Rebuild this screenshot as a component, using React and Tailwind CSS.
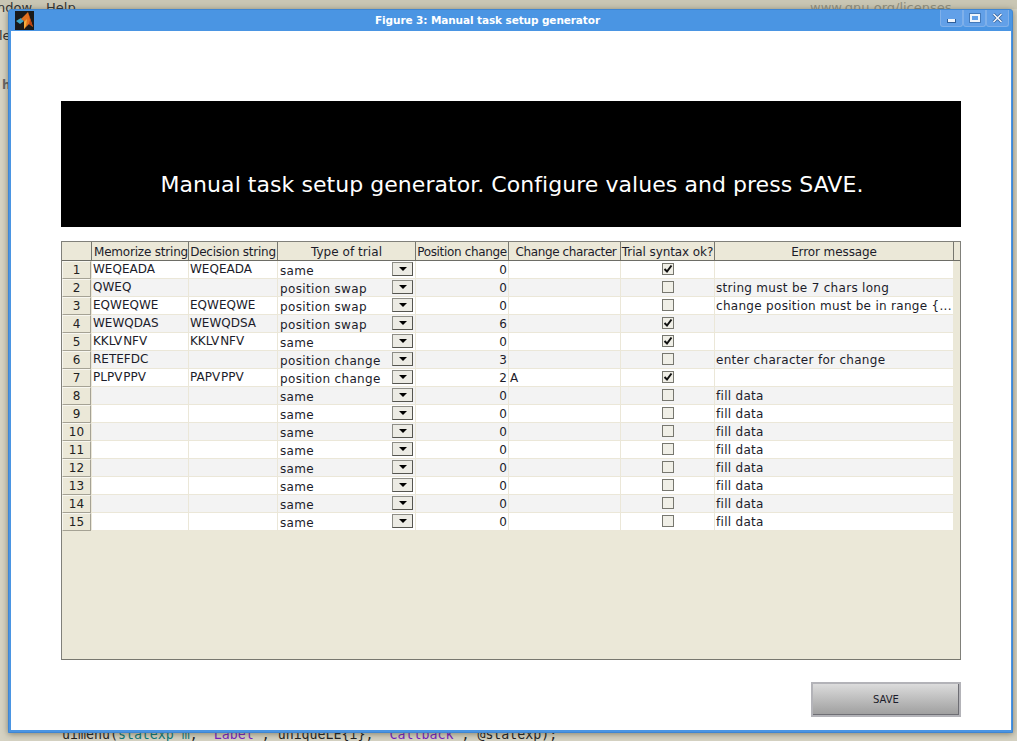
const rows = [
  ["WEQEADA", "WEQEADA", "same", "0", "", true, ""],
  ["QWEQ", "", "position swap", "0", "", false, "string must be 7 chars long"],
  ["EQWEQWE", "EQWEQWE", "position swap", "0", "", false, "change position must be in range {..."],
  ["WEWQDAS", "WEWQDSA", "position swap", "6", "", true, ""],
  ["KKLV NFV", "KKLV NFV", "same", "0", "", true, ""],
  ["RETEFDC", "", "position change", "3", "", false, "enter character for change"],
  ["PLPV PPV", "PAPV PPV", "position change", "2", "A", true, ""],
  ...Array.from({ length: 8 }, () => ["", "", "same", "0", "", false, "fill data"]),
];

const headers = [
  ["Memorize string", "w-[97px] pl-[2px] tracking-[-0.2px]"],
  ["Decision string", "w-[89px] tracking-[-0.25px]"],
  ["Type of trial", "w-[138px] tracking-[0.05px]"],
  ["Position change", "w-[93px] tracking-[-0.35px]"],
  ["Change character", "w-[112px] pl-[3px] tracking-[-0.4px]"],
  ["Trial syntax ok?", "w-[94px] tracking-[-0.1px]"],
  ["Error message", "w-[239px] tracking-[-0.1px]"],
];

function Logo() {
  return (
    <svg width="19" height="19" viewBox="0 0 19 19" className="bg-[#1a1a1a]">
      <path d="M1 10 L6 7 L9 10 L5 13 Z" fill="#3fa4c4" />
      <path d="M6 8 L13 1 L18 16 L14 13 L9 18 L9 10 Z" fill="#e2701f" />
      <path d="M13 1 L15 9 L14 13 L18 16 Z" fill="#b93f10" />
      <path d="M9 11 L12 8 L11 15 L9 18 Z" fill="#f3ad3c" />
    </svg>
  );
}

function WinBtn({ children }) {
  return (
    <div className="w-[23px] h-[17px] border border-[#7fb0ea] border-t-0 rounded-b-[3px] bg-[#62a0e8] flex items-center justify-center">
      {children}
    </div>
  );
}

function Row({ r, i }) {
  const bg = i % 2 === 0 ? "bg-white" : "bg-[#f3f3f3]";
  const cell = "h-full border-l border-b border-[#ebe7d8] shrink-0 flex items-center overflow-hidden whitespace-nowrap";
  return (
    <div className="flex h-[18px] text-[12px] text-[#1c1c2a]">
      <div className="w-[29px] h-full shrink-0 bg-[#ebe8d8] border border-[#a5a294] border-t-[#f8f7f0] border-l-[#f8f7f0] flex items-center justify-center text-[#222]">
        {i + 1}
      </div>
      <div className={`w-[97px] pl-px pb-[2px] [word-spacing:-3px] ${cell} ${bg}`}>{r[0]}</div>
      <div className={`w-[89px] pl-px pb-[2px] [word-spacing:-3px] ${cell} ${bg}`}>{r[1]}</div>
      <div className={`w-[138px] pl-[2px] pr-[2px] justify-between ${cell} ${bg}`}>
        <span className="tracking-[0.35px] pt-[2px]">{r[2]}</span>
        <span className="mb-[2px] w-[21px] h-[14px] bg-[#ecebe4] border border-[#8d8d86] border-b-[#55554f] border-r-[#55554f] flex items-center justify-center">
          <span className="w-0 h-0 border-l-[4px] border-r-[4px] border-t-[4px] border-l-transparent border-r-transparent border-t-black" />
        </span>
      </div>
      <div className={`w-[93px] pr-[1px] justify-end ${cell} ${bg}`}>{r[3]}</div>
      <div className={`w-[112px] pl-px ${cell} ${bg}`}>{r[4]}</div>
      <div className={`w-[94px] justify-center pl-px ${cell} ${bg}`}>
        <span className="mb-[2px] w-[12px] h-[12px] bg-[#f0efe7] border border-[#77776f] flex items-center justify-center">
          {r[5] && (
            <svg width="10" height="10" viewBox="0 0 10 10">
              <path d="M1.5 5 L4 7.5 L8.5 1.5" fill="none" stroke="#111" strokeWidth="2" />
            </svg>
          )}
        </span>
      </div>
      <div className={`w-[239px] pl-px tracking-[0.3px] ${cell} ${bg}`}>{r[6]}</div>
    </div>
  );
}

export default function App() {
  return (
    <div className="relative w-[1017px] h-[741px] overflow-hidden bg-[#d5d2c2] font-['DejaVu_Sans','Liberation_Sans',sans-serif]">
      <div className="absolute left-0 top-0 w-full h-[9px] bg-[#c9c6b4] text-[13px] text-[#333] leading-none">
        <span className="absolute left-[-3px] top-[1px]">ndow</span>
        <span className="absolute left-[46px] top-[1px]">Help</span>
        <span className="absolute left-[810px] top-[1px] text-[#8f8e7e]">www.gnu.org/licenses</span>
      </div>
      <div className="absolute left-[-1px] top-[26px] text-[13px] text-[#333]">le</div>
      <div className="absolute left-[2px] top-[76px] text-[12px] font-bold text-[#666]">h</div>
      <div className="absolute left-[62px] top-[725px] font-['DejaVu_Sans_Mono',monospace] text-[13.28px] whitespace-pre text-[#222]">
        uimenu(<span className="text-[#0a7a7a]">statexp_m</span>, <span className="text-[#7a1fc4]">'Label'</span>, uniqueLE{"{"}i{"}"}, <span className="text-[#7a1fc4]">'Callback'</span>, @statexp);
      </div>

      <div className="absolute left-[8px] top-[9px] w-[1005px] h-[724px] bg-[#4a95e3] border border-[#3f86d2] rounded-t-[3px] shadow-[0_1px_6px_rgba(60,60,40,0.55)] flex flex-col">
        <div className="relative h-[21px] shrink-0 flex items-center justify-center font-bold text-[10.5px] tracking-[-0.1px] text-white">
          <div className="absolute left-[6px] top-[1px]"><Logo /></div>
          <span className="pr-[46px]">Figure 3: Manual task setup generator</span>
          <div className="absolute right-[3px] top-0 flex">
            <WinBtn><span className="mt-[6px] w-[7px] h-[3px] bg-[#f0f5fb] border border-[#2f5f9a] border-t-0 box-content" /></WinBtn>
            <WinBtn><span className="w-[10px] h-[8px] border-2 border-[#f0f5fb] outline outline-1 outline-[#2f5f9a]/60" /></WinBtn>
            <WinBtn>
              <svg width="11" height="10" viewBox="0 0 11 10">
                <path d="M1.5 1 L9.5 9 M9.5 1 L1.5 9" stroke="#2f5f9a" strokeWidth="3" />
                <path d="M1.5 1 L9.5 9 M9.5 1 L1.5 9" stroke="#f5f8fc" strokeWidth="1.6" />
              </svg>
            </WinBtn>
          </div>
        </div>

        <div className="flex-1 ml-[2px] mr-px mb-[2px] bg-white flex flex-col items-start pl-[50px] pt-[70px]">
          <div className="w-[900px] h-[126px] shrink-0 bg-black text-white text-[22px] tracking-[0.05px] flex items-end justify-center pl-[2px] pb-[27px] leading-[30px]">
            Manual task setup generator. Configure values and press SAVE.
          </div>

          <div className="mt-[14px] w-[900px] h-[419px] shrink-0 bg-[#ebe8d8] border border-[#80807a] border-b-[#77776f] flex flex-col">
            <div className="flex h-[18px] shrink-0 text-[12px] text-[#1c1c2a] border-b border-[#6d6d66] box-content">
              <div className="w-[29px] shrink-0" />
              {headers.map(([h, w]) => (
                <div key={h} className={`${w} pt-[2px] shrink-0 border-l border-[#77776f] flex items-center justify-center whitespace-nowrap overflow-hidden`}>
                  {h}
                </div>
              ))}
              <div className="border-l border-[#77776f]" />
            </div>
            <div className="flex flex-col">
              {rows.map((r, i) => <Row key={i} r={r} i={i} />)}
            </div>
          </div>

          <div className="mt-[22px] ml-[750px] w-[150px] h-[35px] shrink-0 border-2 border-[#b3b3b8] bg-gradient-to-b from-[#dcdcdc] to-[#9e9e9e] shadow-[inset_-1px_-1px_0_#6e6e74] flex items-center justify-center text-[10px] text-[#1c1c2a]">
            SAVE
          </div>
        </div>
      </div>
    </div>
  );
}
